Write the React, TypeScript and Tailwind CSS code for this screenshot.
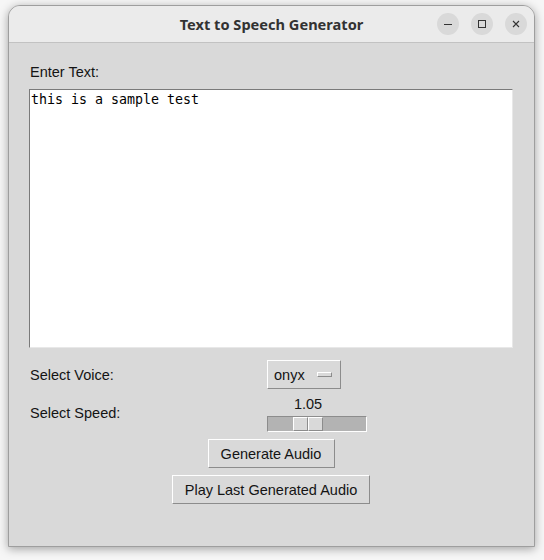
import React from "react";

const sans = { fontFamily: '"Liberation Sans", Arial, sans-serif' };

function Raised({ className = "", children }: { className?: string; children: React.ReactNode }) {
  return (
    <div
      className={`border border-t-white border-l-white border-r-[#8c8c8c] border-b-[#8c8c8c] bg-[#d9d9d9] flex items-center ${className}`}
    >
      {children}
    </div>
  );
}

export default function App() {
  return (
    <div className="w-[544px] h-[560px] bg-[#f6f6f6] pt-[5px] pl-[8px]" style={sans}>
      <div className="w-[527px] h-[542px] rounded-t-[12px] overflow-hidden bg-[#d9d9d9] border border-[#9e9e9e] shadow-[0_2px_10px_rgba(0,0,0,0.35)] flex flex-col">
        {/* Title bar */}
        <div className="h-[37px] shrink-0 bg-[#ebebeb] border-b border-[#c2c2c2] grid grid-cols-[1fr_auto_1fr] items-center">
          <div />
          <div
            className="text-[14.6px] font-bold text-[#323232] leading-none"
            style={{ fontFamily: '"Noto Sans", "Open Sans", sans-serif' }}
          >
            Text to Speech Generator
          </div>
          <div className="flex justify-end gap-[12px] pr-[7px]">
            <div className="w-[22px] h-[22px] rounded-full bg-[#d9d9d9] flex items-center justify-center">
              <div className="w-[8px] h-[1px] bg-[#333]" />
            </div>
            <div className="w-[22px] h-[22px] rounded-full bg-[#d9d9d9] flex items-center justify-center">
              <div className="w-[8px] h-[8px] border border-[#333]" />
            </div>
            <div className="w-[22px] h-[22px] rounded-full bg-[#d9d9d9] flex items-center justify-center">
              <svg width="8" height="8" viewBox="0 0 8 8">
                <path d="M1 1 L7 7 M7 1 L1 7" stroke="#333" strokeWidth="1.1" />
              </svg>
            </div>
          </div>
        </div>

        {/* Body */}
        <div className="flex flex-col pl-[20px] pr-[21px] pt-[21px] text-[14.5px] text-[#141414] leading-[16px]">
          <div className="pl-[1px]">Enter Text:</div>
          <div
            className="mt-[9px] h-[259px] bg-white border border-t-[#7a7a7a] border-l-[#7a7a7a] border-r-[#e8e8e8] border-b-[#e8e8e8] pl-[1px] pt-[2px] text-[13.3px] leading-[16px] text-black"
            style={{ fontFamily: '"DejaVu Sans Mono", monospace' }}
          >
            this is a sample test
          </div>

          {/* Voice row */}
          <div className="mt-[12px] flex items-center">
            <div className="w-[238px] pl-[1px]">Select Voice:</div>
            <Raised className="w-[74px] h-[29px] pl-[6px] pr-[8px] justify-between">
              <span>onyx</span>
              <div className="w-[15px] h-[5px] bg-[#d9d9d9] border border-t-white border-l-white border-r-[#8c8c8c] border-b-[#8c8c8c]" />
            </Raised>
          </div>

          {/* Speed row */}
          <div className="mt-[7px] flex items-center">
            <div className="w-[238px] pl-[1px] pb-[3px]">Select Speed:</div>
            <div className="w-[100px] flex flex-col">
              <div className="ml-[26px] w-[30px] text-center">1.05</div>
              <div className="mt-[4px] h-[16px] bg-[#b3b3b3] border border-t-[#8c8c8c] border-l-[#8c8c8c] border-r-white border-b-white flex">
                <div className="ml-[25px] flex">
                  <div className="w-[15px] h-[14px] bg-[#d9d9d9] border border-t-white border-l-white border-r-[#8c8c8c] border-b-[#8c8c8c]" />
                  <div className="w-[15px] h-[14px] bg-[#d9d9d9] border border-t-white border-l-white border-r-[#8c8c8c] border-b-[#8c8c8c]" />
                </div>
              </div>
            </div>
          </div>

          {/* Buttons */}
          <div className="mt-[7px] flex flex-col items-center">
            <Raised className="w-[127px] h-[29px] justify-center">Generate Audio</Raised>
            <Raised className="mt-[7px] w-[198px] h-[29px] justify-center">Play Last Generated Audio</Raised>
          </div>
        </div>
      </div>
    </div>
  );
}
